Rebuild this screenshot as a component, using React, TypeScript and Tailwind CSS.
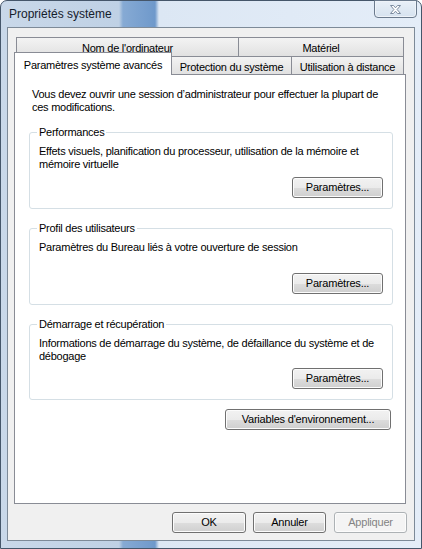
import React from 'react';

const font = "font-['Liberation_Sans',Arial,sans-serif]";

function WinButton({ label, className, disabled }: { label: string; className: string; disabled?: boolean }) {
  return (
    <button
      className={
        'flex items-center justify-center rounded-[3px] border text-[11px] tracking-[-0.2px] leading-none shadow-[inset_0_0_0_1px_#fcfcfc] ' +
        (disabled
          ? 'border-[#adb2b5] bg-[#f4f4f4] text-[#838383] '
          : 'border-[#707070] bg-[linear-gradient(180deg,#f2f2f2_0%,#ebebeb_50%,#dddddd_51%,#cfcfcf_100%)] text-black ') +
        className
      }
    >
      {label}
    </button>
  );
}

function GroupBox({ title, height, children }: { title: string; height: string; children: React.ReactNode }) {
  return (
    <div className={'relative ml-[14px] w-[364px] rounded-[3px] border border-[#d5dfe5] flex flex-col pl-[9px] pr-[9px] pt-[12px] pb-[10px] ' + height}>
      <span className="absolute -top-[7px] left-[7px] bg-white px-[2px] leading-[13px]">{title}</span>
      <p className="leading-[13px]">{children}</p>
      <div className="mt-auto flex justify-end">
        <WinButton label="Paramètres..." className="w-[91px] h-[21px]" />
      </div>
    </div>
  );
}

export default function App() {
  return (
    <div
      className={
        'w-[422px] h-[549px] flex flex-col rounded-t-[7px] border border-[#45566a] bg-[linear-gradient(90deg,#c9d8e9_0px,#bfd1e5_118px,#86aad4_122px,#6f99cb_154px,#dce7f4_158px,#e4edf8_100%)] ' +
        font
      }
    >
      {/* title bar */}
      <div className="h-[26px] flex items-start justify-between pl-[8px] pr-[4px]">
        <span className="mt-[6px] text-[12px] leading-[14px] text-[#15202c]">Propriétés système</span>
        <div className="-mt-px w-[43px] h-[18px] rounded-b-[4px] border border-[#6b7a8d] shadow-[inset_0_0_0_1px_#eef3f9] bg-[linear-gradient(180deg,#e9f0f8,#d6e2ef)] flex items-center justify-center">
          <svg width="11" height="9" viewBox="0 0 11 9">
            <path
              d="M0.5 0.5h3l2 2.3 2-2.3h3l-3.4 4 3.4 4h-3l-2-2.3-2 2.3h-3l3.4-4z"
              fill="#ffffff"
              stroke="#7d8ca0"
              strokeWidth="1"
            />
          </svg>
        </div>
      </div>

      {/* client area */}
      <div className="mx-[6px] mb-[7px] flex-1 flex flex-col bg-[#f0f0f0] border border-[#7d8a98] text-[11px] tracking-[-0.25px] text-black">
        <div className="pl-[6px] pt-[9px]">
          {/* back row of tabs */}
          <div className="flex ml-[2px] h-[20px]">
            <div className="w-[223px] h-[20px] border border-[#898c95] bg-[linear-gradient(180deg,#f3f3f3,#e1e1e1)] flex justify-center pt-[2px]">
              Nom de l'ordinateur
            </div>
            <div className="-ml-px w-[166px] h-[20px] border border-[#898c95] bg-[linear-gradient(180deg,#f3f3f3,#e1e1e1)] flex justify-center pt-[2px]">
              Matériel
            </div>
          </div>
          {/* front row of tabs */}
          <div className="flex items-start h-[22px] -mt-[5px]">
            <div className="relative z-10 w-[158px] h-[23px] border border-b-0 border-[#898c95] bg-white flex justify-center pt-[4px]">
              Paramètres système avancés
            </div>
            <div className="mt-[4px] w-[120px] h-[18px] border border-b-0 border-l-0 border-[#898c95] bg-[linear-gradient(180deg,#f3f3f3,#e1e1e1)] flex justify-center pt-[2px]">
              Protection du système
            </div>
            <div className="-ml-px mt-[4px] w-[113px] h-[18px] border border-b-0 border-[#898c95] bg-[linear-gradient(180deg,#f3f3f3,#e1e1e1)] flex justify-center pt-[2px]">
              Utilisation à distance
            </div>
          </div>
          {/* tab page */}
          <div className="w-[392px] h-[430px] border border-[#898c95] bg-white flex flex-col">
            <p className="pl-[17px] pt-[13px] leading-[13px]">
              Vous devez ouvrir une session d’administrateur pour effectuer la plupart de
              <br />
              ces modifications.
            </p>
            <div className="mt-[18px]">
              <GroupBox title="Performances" height="h-[77px]">
                Effets visuels, planification du processeur, utilisation de la mémoire et
                <br />
                mémoire virtuelle
              </GroupBox>
            </div>
            <div className="mt-[19px]">
              <GroupBox title="Profil des utilisateurs" height="h-[77px]">
                Paramètres du Bureau liés à votre ouverture de session
              </GroupBox>
            </div>
            <div className="mt-[19px]">
              <GroupBox title="Démarrage et récupération" height="h-[76px]">
                Informations de démarrage du système, de défaillance du système et de
                <br />
                débogage
              </GroupBox>
            </div>
            <div className="mt-[9px] ml-[14px] w-[364px] flex justify-end pr-[2px]">
              <WinButton label="Variables d'environnement..." className="w-[166px] h-[21px]" />
            </div>
          </div>
        </div>

        {/* dialog buttons */}
        <div className="mt-[8px] flex justify-end gap-[7px] pr-[7px]">
          <WinButton label="OK" className="w-[74px] h-[21px]" />
          <WinButton label="Annuler" className="w-[73px] h-[21px]" />
          <WinButton label="Appliquer" className="ml-px w-[73px] h-[21px]" disabled />
        </div>
      </div>
    </div>
  );
}
